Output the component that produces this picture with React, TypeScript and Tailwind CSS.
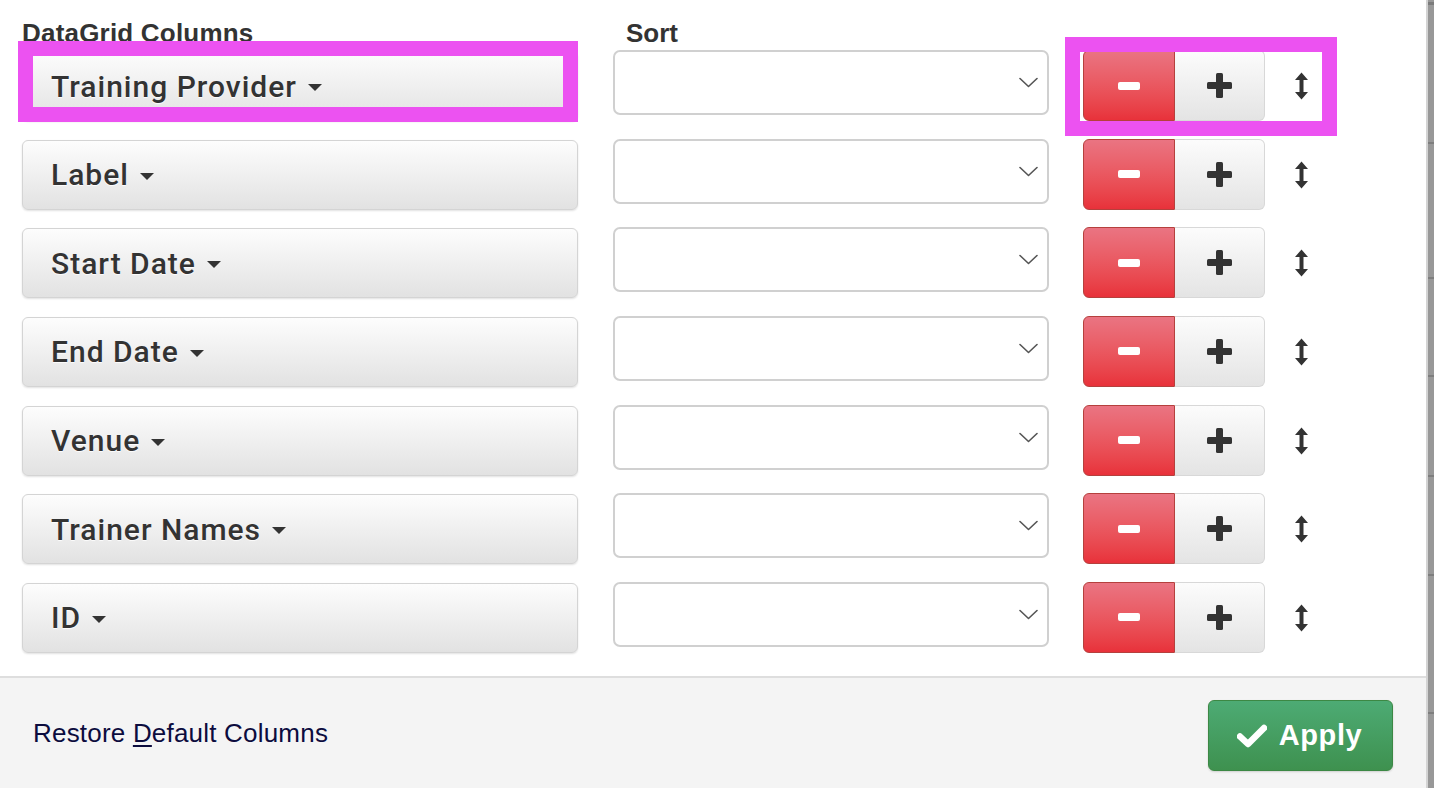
import React from "react";

const columns = [
  "Training Provider",
  "Label",
  "Start Date",
  "End Date",
  "Venue",
  "Trainer Names",
  "ID",
];

function Chevron() {
  return (
    <svg width="19" height="11" viewBox="0 0 19 11" fill="none">
      <path d="M1 1.5 L9.5 9.5 L18 1.5" stroke="#555" strokeWidth="1.6" strokeLinecap="round" strokeLinejoin="round" />
    </svg>
  );
}

function UpDown() {
  return (
    <svg width="15" height="28" viewBox="0 0 15 28">
      <path d="M7.5 0.5 L14 8 L9.5 8 L9.5 20 L14 20 L7.5 27.5 L1 20 L5.5 20 L5.5 8 L1 8 Z" fill="#333" strokeLinejoin="round" />
    </svg>
  );
}

function Plus() {
  return (
    <svg width="27" height="27" viewBox="0 0 27 27">
      <rect x="10" y="1" width="7" height="25" rx="1.5" fill="#333" />
      <rect x="1" y="10" width="25" height="7" rx="1.5" fill="#333" />
    </svg>
  );
}

function Check() {
  return (
    <svg width="30" height="24" viewBox="0 0 30 24">
      <path d="M3 12.5 L11 20 L27 4" stroke="#fff" strokeWidth="6.5" fill="none" strokeLinecap="round" strokeLinejoin="round" />
    </svg>
  );
}

function ColumnRow({ name }: { name: string }) {
  return (
    <div className="flex h-[70px] items-start">
      {/* column picker */}
      <button className="flex h-[70px] w-[556px] items-center gap-[11px] rounded-[6px] border border-[#d4d4d4] bg-gradient-to-b from-[#fdfdfd] to-[#e2e2e2] pl-[28px] text-[#333] shadow-[0_1px_2px_rgba(0,0,0,0.12)]">
        <span className="font-['Roboto',sans-serif] text-[30px] font-medium tracking-[1px] [text-shadow:0_1px_1px_rgba(255,255,255,0.9)]">
          {name}
        </span>
        <span className="mt-[3px] h-0 w-0 border-x-[7px] border-t-[7px] border-x-transparent border-t-[#333]" />
      </button>

      {/* sort select */}
      <div className="ml-[35px] -mt-px flex h-[65px] w-[436px] items-center justify-end rounded-[7px] border-2 border-[#d0d0d0] bg-white pr-[9px]">
        <Chevron />
      </div>

      {/* remove / add */}
      <div className="ml-[34px] -mt-px flex h-[71px] w-[182px]">
        <button className="flex flex-1 items-center justify-center rounded-l-[6px] border border-[#b5403d] bg-gradient-to-b from-[#ea7482] to-[#e8313a]">
          <span className="h-[8px] w-[22px] rounded-[2px] bg-white" />
        </button>
        <button className="flex flex-1 items-center justify-center rounded-r-[6px] border border-l-0 border-[#d8d8d8] bg-gradient-to-b from-[#fcfcfc] to-[#e4e4e4]">
          <Plus />
        </button>
      </div>

      <div className="ml-[29px] flex h-[70px] items-center">
        <UpDown />
      </div>
    </div>
  );
}

export default function App() {
  return (
    <div className="relative flex h-[788px] w-[1434px] overflow-hidden bg-white font-['Liberation_Sans',Arial,sans-serif]">
      <div className="flex w-[1426px] flex-col">
        {/* body */}
        <div className="h-[676px] px-[22px] pt-[20px]">
          <div className="flex text-[26px] font-bold leading-[26px] text-[#333]">
            <div className="w-[591px] tracking-[0.2px]">DataGrid Columns</div>
            <div className="pl-[13px]">Sort</div>
          </div>
          <div className="mt-[5px] flex flex-col gap-[18.67px]">
            {columns.map((c) => (
              <ColumnRow key={c} name={c} />
            ))}
          </div>
        </div>

        {/* footer */}
        <div className="flex flex-1 items-center justify-between border-t-2 border-[#dedede] bg-[#f4f4f4] pl-[33px] pr-[33px]">
          <a className="text-[26px] tracking-[0.2px] text-[#0c0c3e]">
            Restore <span className="underline underline-offset-[3px]">D</span>efault Columns
          </a>
          <button className="mt-[5px] flex h-[71px] w-[185px] items-center justify-center gap-[12px] rounded-[6px] border border-[#3c8844] bg-gradient-to-b from-[#4dab74] to-[#3e914f] pr-[2px] text-white shadow-[0_1px_2px_rgba(0,0,0,0.15)]">
            <Check />
            <span className="text-[29px] font-bold tracking-[0.6px]">Apply</span>
          </button>
        </div>
      </div>

      {/* page behind the dialog */}
      <div className="flex w-[8px] flex-col border-l-2 border-[#d3d3d3] bg-[#989898]">
        <div className="mt-[2px] h-[3px] bg-[#7b7b7b]" />
        <div className="mt-[137px] h-[2px] bg-[#7e7e7e]" />
        <div className="mt-[133px] h-[2px] bg-[#7e7e7e]" />
        <div className="mt-[96px] h-[2px] bg-[#7e7e7e]" />
        <div className="mt-[98px] h-[2px] bg-[#7e7e7e]" />
        <div className="mt-[97px] h-[2px] bg-[#7e7e7e]" />
        <div className="mt-[136px] h-[2px] bg-[#7e7e7e]" />
      </div>

      {/* annotation highlights */}
      <div className="pointer-events-none absolute left-[18px] top-[41px] h-[81px] w-[560px] border-[15px] border-[#ec52f1]" />
      <div className="pointer-events-none absolute left-[1065px] top-[37px] h-[99px] w-[272px] border-[15px] border-[#ec52f1]" />
    </div>
  );
}
